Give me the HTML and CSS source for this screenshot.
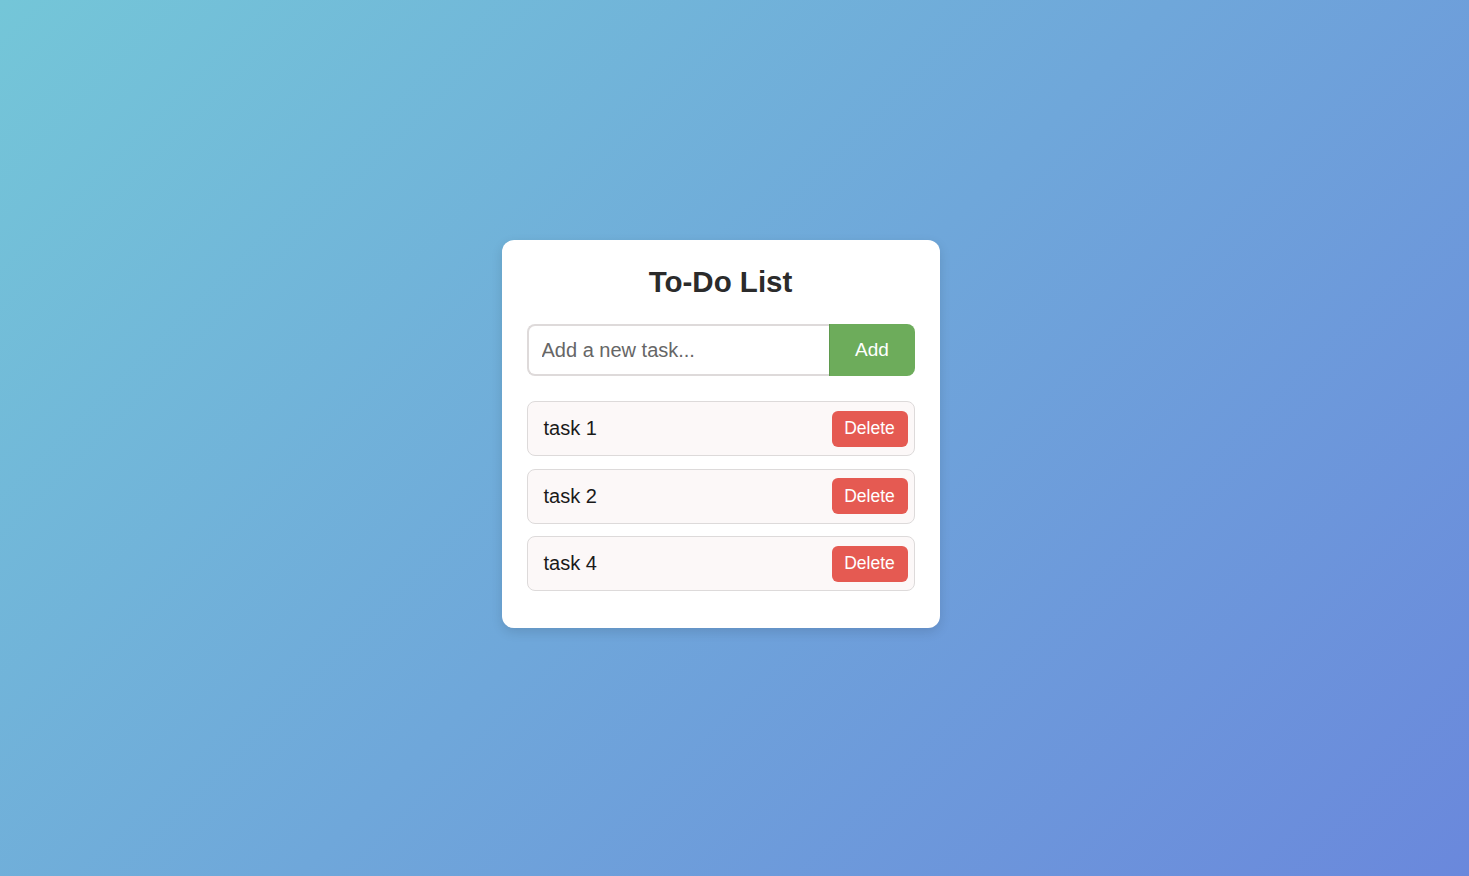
FILE: index.html
```html
<!DOCTYPE html>
<html lang="en">
<head>
<meta charset="utf-8">
<title>To-Do List</title>
<link rel="stylesheet" href="styles.css">
</head>
<body>
<main class="page">
  <section class="card">
    <h1 class="title">To-Do List</h1>
    <form class="add-form">
      <input class="task-input" type="text" placeholder="Add a new task...">
      <button class="add-btn" type="button">Add</button>
    </form>
    <ul class="task-list">
      <li class="task"><span class="task-text">task 1</span><button class="del-btn" type="button">Delete</button></li>
      <li class="task"><span class="task-text">task 2</span><button class="del-btn" type="button">Delete</button></li>
      <li class="task"><span class="task-text">task 4</span><button class="del-btn" type="button">Delete</button></li>
    </ul>
  </section>
</main>
</body>
</html>
```

FILE: styles.css
```css
html, body {
  margin: 0;
  height: 100%;
}
body {
  font-family: "Liberation Sans", Arial, sans-serif;
  background: linear-gradient(135deg, #74c6d8 0%, #6a88dc 100%);
}
.page {
  height: 876px;
  display: flex;
  justify-content: center;
  align-items: flex-start;
  padding: 240px 28px 0 0;
  box-sizing: border-box;
}
.card {
  width: 438px;
  box-sizing: border-box;
  background: #fff;
  border-radius: 12px;
  padding: 25px 25px 37px;
  box-shadow: 0 4px 12px rgba(0, 0, 0, 0.12);
}
.title {
  margin: 0 0 26px;
  text-align: center;
  font-size: 29.5px;
  font-weight: bold;
  color: #2b2b2b;
  line-height: 33px;
}
.add-form {
  display: flex;
  margin: 0 0 25px;
}
.task-input {
  flex: 1;
  min-width: 0;
  height: 52px;
  box-sizing: border-box;
  border: 2px solid #dedada;
  border-right: none;
  border-radius: 8px 0 0 8px;
  padding: 0 13px;
  font-family: inherit;
  font-size: 20px;
  color: #333;
  outline: none;
}
.task-input::placeholder {
  color: #666;
}
.add-btn {
  width: 86px;
  height: 52px;
  border: none;
  border-left: 1px solid #5f9a4e;
  border-radius: 0 8px 8px 0;
  background: #6dac5b;
  color: #fff;
  font-family: inherit;
  font-size: 19px;
}
.task-list {
  list-style: none;
  margin: 0;
  padding: 0;
  display: flex;
  flex-direction: column;
  gap: 12.5px;
}
.task {
  height: 55px;
  box-sizing: border-box;
  display: flex;
  align-items: center;
  justify-content: space-between;
  background: #fcf8f8;
  border: 1px solid #dddada;
  border-radius: 8px;
  padding: 0 6px 0 16px;
}
.task-text {
  font-size: 20px;
  color: #1a1a1a;
}
.del-btn {
  width: 76px;
  height: 36px;
  border: none;
  border-radius: 6px;
  background: #e55a52;
  color: #fff;
  font-family: inherit;
  font-size: 17.5px;
}
```
